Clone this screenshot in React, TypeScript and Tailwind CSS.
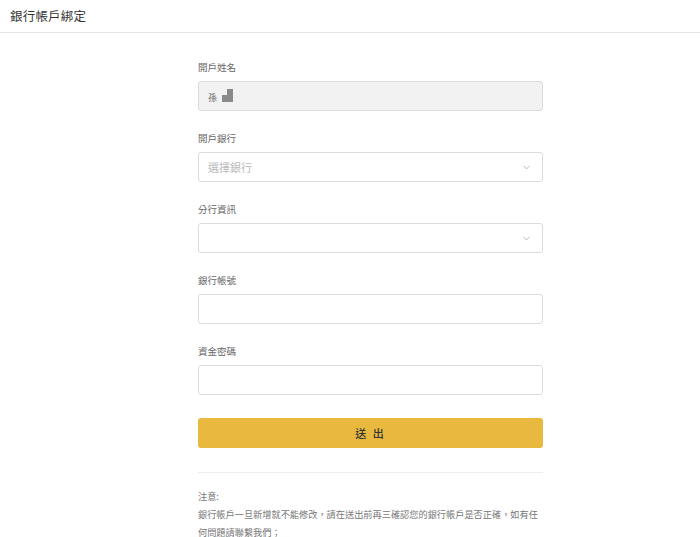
import { ChevronDown } from "lucide-react";

const font = { fontFamily: '"Noto Sans CJK TC", "Noto Sans", sans-serif' };

function Label({ children }: { children: React.ReactNode }) {
    return <div className="text-[9.5px] leading-[15px] text-[#666] mb-[6px]">{children}</div>;
}

function SelectBox({ placeholder }: { placeholder?: string }) {
    return (
        <div className="h-[30px] border border-[#dcdcdc] rounded-[3px] bg-white flex items-center justify-between pl-[9px] pr-[10px]">
            <span className="text-[11px] text-[#bbb]">{placeholder}</span>
            <ChevronDown size={11} strokeWidth={1.5} className="text-[#999]" />
        </div>
    );
}

export default function App(): JSX.Element {
    return (
        <div className="w-[700px] h-[537px] bg-white overflow-hidden" style={font}>
            {/* ヘッダー */}
            <div className="h-[33px] border-b border-[#e6e6e6] flex items-center pl-[10px]">
                <h1 className="text-[12.5px] text-[#333] tracking-[0.2px]">銀行帳戶綁定</h1>
            </div>

            <div className="w-[345px] ml-[198px] pt-[27px]">
                <div className="mb-[20px]">
                    <Label>開戶姓名</Label>
                    <div className="h-[30px] border border-[#dcdcdc] rounded-[3px] bg-[#f2f2f2] flex items-center pl-[9px]">
                        <span className="text-[9px] text-[#666] mt-[4px]">孫</span>
                        <span className="ml-[5px] flex flex-col items-end mb-[2px]">
                            <span className="w-[6px] h-[6px] bg-[#8a8a8a]" />
                            <span className="w-[11px] h-[7px] bg-[#8a8a8a]" />
                        </span>
                    </div>
                </div>

                <div className="mb-[20px]">
                    <Label>開戶銀行</Label>
                    <SelectBox placeholder="選擇銀行" />
                </div>

                <div className="mb-[20px]">
                    <Label>分行資訊</Label>
                    <SelectBox />
                </div>

                <div className="mb-[20px]">
                    <Label>銀行帳號</Label>
                    <div className="h-[30px] border border-[#dcdcdc] rounded-[3px] bg-white" />
                </div>

                <div className="mb-[23px]">
                    <Label>資金密碼</Label>
                    <div className="h-[30px] border border-[#dcdcdc] rounded-[3px] bg-white" />
                </div>

                <button className="w-full h-[30px] rounded-[3px] bg-[#e8b83f] text-[11px] text-[#333] font-medium tracking-[2px] flex items-center justify-center">
                    送 出
                </button>

                <div className="mt-[24px] border-t border-[#eeeeee]" />

                <div className="mt-[14px] text-[9.2px] leading-[18px] text-[#777]">
                    <p>注意:</p>
                    <p>銀行帳戶一旦新增就不能修改，請在送出前再三確認您的銀行帳戶是否正確，如有任何問題請聯繫我們；</p>
                </div>
            </div>
        </div>
    );
}
